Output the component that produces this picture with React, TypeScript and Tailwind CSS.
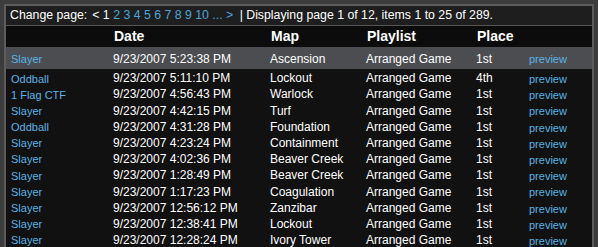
import React from "react";

const rows = [
  ["Slayer", "9/23/2007 5:23:38 PM", "Ascension", "Arranged Game", "1st"],
  ["Oddball", "9/23/2007 5:11:10 PM", "Lockout", "Arranged Game", "4th"],
  ["1 Flag CTF", "9/23/2007 4:56:43 PM", "Warlock", "Arranged Game", "1st"],
  ["Slayer", "9/23/2007 4:42:15 PM", "Turf", "Arranged Game", "1st"],
  ["Oddball", "9/23/2007 4:31:28 PM", "Foundation", "Arranged Game", "1st"],
  ["Slayer", "9/23/2007 4:23:24 PM", "Containment", "Arranged Game", "1st"],
  ["Slayer", "9/23/2007 4:02:36 PM", "Beaver Creek", "Arranged Game", "1st"],
  ["Slayer", "9/23/2007 1:28:49 PM", "Beaver Creek", "Arranged Game", "1st"],
  ["Slayer", "9/23/2007 1:17:23 PM", "Coagulation", "Arranged Game", "1st"],
  ["Slayer", "9/23/2007 12:56:12 PM", "Zanzibar", "Arranged Game", "1st"],
  ["Slayer", "9/23/2007 12:38:41 PM", "Lockout", "Arranged Game", "1st"],
  ["Slayer", "9/23/2007 12:28:24 PM", "Ivory Tower", "Arranged Game", "1st"],
];

const cols = "grid grid-cols-[102px_157px_96px_110px_53px_1fr] pl-[5px] items-center";

export default function App() {
  return (
    <div
      className="w-[598px] h-[247px] overflow-hidden bg-[#3c3c3c] pt-[4px] px-[4px] text-white"
      style={{ fontFamily: '"Liberation Sans", Arial, sans-serif' }}
    >
      <div className="h-full border-l-2 border-t-2 border-r-2 border-[#5c5c5c] bg-[#111111]">
        <div className="h-[20px] bg-[#1e1e1e] border-b border-[#555555] pl-[4px] text-[12.3px] leading-[19px] whitespace-nowrap">
          Change page:<span className="pl-[5px]">&lt; 1</span>{" "}
          {["2", "3", "4", "5", "6", "7", "8", "9", "10", "...", ">"].map((p) => (
            <span key={p} className="text-[#4ea4d8]">
              {p}{" "}
            </span>
          ))}
          <span className="pl-[3px]">|</span> Displaying page 1 of 12, items 1 to 25 of 289.
        </div>
        <div className={`${cols} h-[21px] bg-[#0c0c0c] text-[14px] font-bold`}>
          <div />
          <div className="pl-[1px]">Date</div>
          <div className="pl-[1px]">Map</div>
          <div className="pl-[1px]">Playlist</div>
          <div className="pl-[1px]">Place</div>
          <div />
        </div>
        {rows.map((r, i) => (
          <div
            key={i}
            className={`${cols} text-[12px] ${
              i === 0 ? "h-[22px] bg-[#4b4d50] pt-[1px]" : "h-[16.2px] bg-[#111111]"
            }`}
          >
            <div className="text-[11px] text-[#5ab4e6] pt-[1px]">{r[0]}</div>
            <div>{r[1]}</div>
            <div>{r[2]}</div>
            <div>{r[3]}</div>
            <div>{r[4]}</div>
            <div className="text-[11px] text-[#5ab4e6] pt-[2px]">preview</div>
          </div>
        ))}
      </div>
    </div>
  );
}
